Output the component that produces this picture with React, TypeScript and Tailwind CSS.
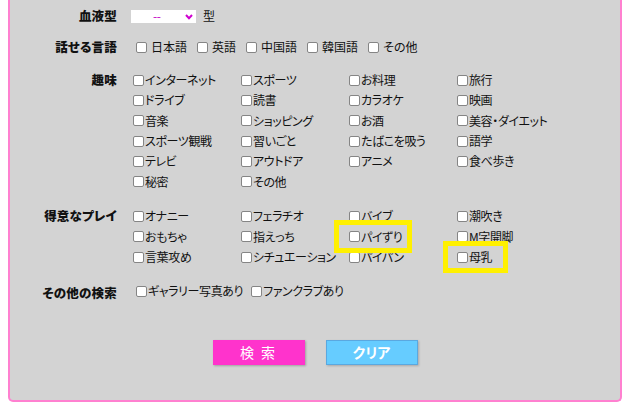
import React from "react";

const hobbies = [
  "インターネット", "スポーツ", "お料理", "旅行",
  "ドライブ", "読書", "カラオケ", "映画",
  "音楽", "ショッピング", "お酒", "美容・ダイエット",
  "スポーツ観戦", "習いごと", "たばこを吸う", "語学",
  "テレビ", "アウトドア", "アニメ", "食べ歩き",
  "秘密", "その他",
];

const plays = [
  "オナニー", "フェラチオ", "バイブ", "潮吹き",
  "おもちゃ", "指えっち", "パイずり", "M字開脚",
  "言葉攻め", "シチュエーション", "パイパン", "母乳",
];

const languages = ["日本語", "英語", "中国語", "韓国語", "その他"];

function Box() {
  return (
    <input
      type="checkbox"
      className="appearance-none w-[11px] h-[11px] border border-[#858585] rounded-[2px] bg-white shrink-0 m-0"
    />
  );
}

function Label({ children, extra = "" }: { children: React.ReactNode; extra?: string }) {
  return (
    <div
      className={
        "w-[107px] shrink-0 text-right font-black text-[12.5px] leading-[20px] text-[#111] tracking-[0.2px] " +
        extra
      }
    >
      {children}
    </div>
  );
}

function GridItems({ items }: { items: string[] }) {
  return (
    <>
      {items.map((t, i) => (
        <label key={i} className="flex items-center whitespace-nowrap text-[12px] tracking-[-0.4px] text-[#111]">
          <Box />
          <span className="ml-[1px]">{t}</span>
        </label>
      ))}
    </>
  );
}

export default function App() {
  return (
    <div className="relative w-[630px] h-[410px] bg-white overflow-hidden font-['Noto_Sans_CJK_JP','Noto_Sans',sans-serif] [font-feature-settings:'palt']">
      <div className="ml-[8px] w-[614px] bg-[#d3d3d3] border-2 border-t-0 border-[#ff80d0] rounded-b-[5px] pt-[6px] pb-[35px]">
        {/* 血液型 */}
        <div className="flex h-[20px] items-center">
          <Label>血液型</Label>
          <div className="ml-[14px] flex items-center">
            <div className="w-[65px] h-[13px] bg-white relative">
              <span className="absolute left-[22px] top-[-1px] text-[12px] leading-[13px] text-[#c400c4] tracking-[-0.5px]">--</span>
              <svg
                className="absolute left-[54px] top-[4px]"
                width="8"
                height="6"
                viewBox="0 0 8 6"
              >
                <path d="M1 1 L4 4.2 L7 1" fill="none" stroke="#d000d0" strokeWidth="2" />
              </svg>
            </div>
            <span className="ml-[7px] text-[12px] text-[#111]">型</span>
          </div>
        </div>

        {/* 話せる言語 */}
        <div className="flex h-[20px] items-center mt-[11px]">
          <Label>話せる言語</Label>
          <div className="ml-[19px] flex items-center gap-[10px] text-[12px] text-[#111]">
            {languages.map((l) => (
              <label key={l} className="flex items-center whitespace-nowrap">
                <Box />
                <span className="ml-[4px]">{l}</span>
              </label>
            ))}
          </div>
        </div>

        {/* 趣味 */}
        <div className="flex mt-[13px]">
          <Label>趣味</Label>
          <div className="ml-[16px] grid grid-cols-[108px_108px_108px_108px] auto-rows-[20.3px]">
            <GridItems items={hobbies} />
          </div>
        </div>

        {/* 得意なプレイ */}
        <div className="flex mt-[14px]">
          <Label>得意なプレイ</Label>
          <div className="ml-[16px] grid grid-cols-[108px_108px_108px_108px] auto-rows-[20.5px]">
            <GridItems items={plays} />
          </div>
        </div>

        {/* その他の検索 */}
        <div className="flex h-[20px] items-center mt-[14px]">
          <Label extra="pt-[4px]">その他の検索</Label>
          <div className="ml-[19px] flex items-center gap-[8px] text-[12px] tracking-[-0.4px] text-[#111]">
            <label className="flex items-center whitespace-nowrap">
              <Box />
              <span className="ml-[1px]">ギャラリー写真あり</span>
            </label>
            <label className="flex items-center whitespace-nowrap">
              <Box />
              <span className="ml-[1px]">ファンクラブあり</span>
            </label>
          </div>
        </div>

        {/* buttons */}
        <div className="flex justify-center gap-[21px] mt-[39px]">
          <button className="w-[92px] h-[25px] bg-[#ff33cc] text-white text-[14px] leading-[25px] tracking-[2px] shadow-[1px_1px_2px_rgba(0,0,0,0.25)]">
            検 索
          </button>
          <button className="w-[92px] h-[25px] bg-[#66ccff] border border-[#5aa8e0] text-white text-[14px] font-bold leading-[23px] shadow-[1px_1px_2px_rgba(0,0,0,0.2)]">
            クリア
          </button>
        </div>
      </div>

      {/* highlight overlays */}
      <div className="absolute left-[334px] top-[220px] w-[78px] h-[33px] border-[5px] border-[#fff000] pointer-events-none" />
      <div className="absolute left-[443px] top-[241px] w-[65px] h-[32px] border-[5px] border-[#fff000] pointer-events-none" />
    </div>
  );
}
